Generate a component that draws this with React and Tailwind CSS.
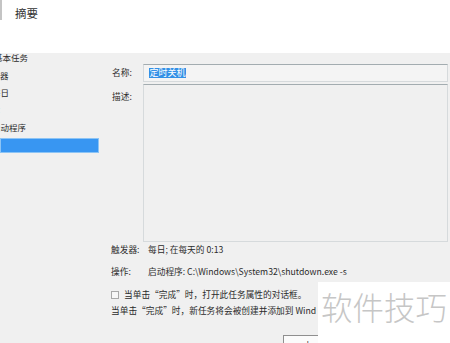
const navItems = [
  { text: '创建基本任务', indent: '-ml-[23px]' },
  { text: '触发器', indent: '-ml-[17px]' },
  { text: '每日', indent: '-ml-[8px]' },
  { text: '操作', indent: '-ml-[17px]' },
  { text: '启动程序', indent: '-ml-[8px]' },
];

function Field({ children, className = '' }) {
  return (
    <div className={`border border-[#d6dadc] border-t-[#a3acb0] ${className}`}>
      {children}
    </div>
  );
}

export default function App() {
  return (
    <div
      className="relative w-[450px] h-[343px] overflow-hidden bg-[#f0f0f0] text-[#2b2b2b]"
      style={{ fontFamily: '"Noto Sans CJK SC", "Noto Sans", sans-serif' }}
    >
      <div className="h-[53px] bg-white flex items-start">
        <div className="w-[2px] h-[20px] bg-[#c4c4c4]" />
        <p className="ml-[13px] mt-[6px] text-[11.5px] leading-[14px] text-[#333]">摘要</p>
      </div>

      <div className="flex">
        <div className="w-[100px] shrink-0 -mt-[4px] overflow-hidden text-[8.5px]">
          {navItems.map((item) => (
            <div key={item.text} className="h-[17.5px] flex items-center whitespace-nowrap">
              <span className={item.indent}>{item.text}</span>
            </div>
          ))}
          <div className="h-[17.5px] flex items-center">
            <div className="w-[99px] h-[15px] bg-[#3896f2] border border-[#8cc4f5]" />
          </div>
        </div>

        <div className="flex-1 pt-[11px] text-[8.7px]">
          <div className="flex items-center h-[18px]">
            <span className="w-[43px] shrink-0 pl-[12px] whitespace-nowrap">名称:</span>
            <Field className="flex-1 mr-[2px] h-[18px] flex items-center pl-[5px] bg-[#f4f4f4]">
              <span className="bg-[#3390e6] text-white text-[9px] leading-[10px] px-[0.5px]">定时关机</span>
            </Field>
          </div>

          <div className="flex mt-[2px]">
            <span className="w-[43px] shrink-0 pl-[12px] pt-[6px] whitespace-nowrap">描述:</span>
            <Field className="flex-1 mr-[2px] h-[158px] bg-[#f0f0f0]" />
          </div>

          <div className="flex items-center h-[16px]">
            <span className="w-[48px] shrink-0 pl-[11px] whitespace-nowrap">触发器:</span>
            <span className="whitespace-nowrap">每日; 在每天的 0:13</span>
          </div>
          <div className="flex items-center h-[16px] mt-[6px]">
            <span className="w-[48px] shrink-0 pl-[11px] whitespace-nowrap">操作:</span>
            <span className="whitespace-nowrap">启动程序: C:\Windows\System32\shutdown.exe -s</span>
          </div>

          <div className="flex items-center h-[16px] mt-[7px] pl-[11px]">
            <span className="w-[8px] h-[8px] shrink-0 border border-[#a9a9a9] bg-[#f7f7f7]" />
            <span className="ml-[5px] whitespace-nowrap">当单击“完成”时，打开此任务属性的对话框。</span>
          </div>
          <div className="w-[216px] h-[16px] pl-[11px] flex items-center overflow-hidden whitespace-nowrap">
            当单击“完成”时，新任务将会被创建并添加到 Windows 计划中。
          </div>

          <div className="mt-[16px] ml-[183px] w-[35px] h-[22px] border border-[#8f8f8f] border-r-0 bg-[#fbfbfb] flex items-center pl-[13px] overflow-hidden whitespace-nowrap">
            &lt; 上
          </div>
        </div>
      </div>

      <div className="absolute left-[318px] top-[282px] w-[132px] h-[61px] bg-white pl-[3px] pt-[9px]">
        <span className="text-[31.5px] leading-none font-light text-[#c6c6c6] whitespace-nowrap">软件技巧</span>
      </div>
    </div>
  );
}
